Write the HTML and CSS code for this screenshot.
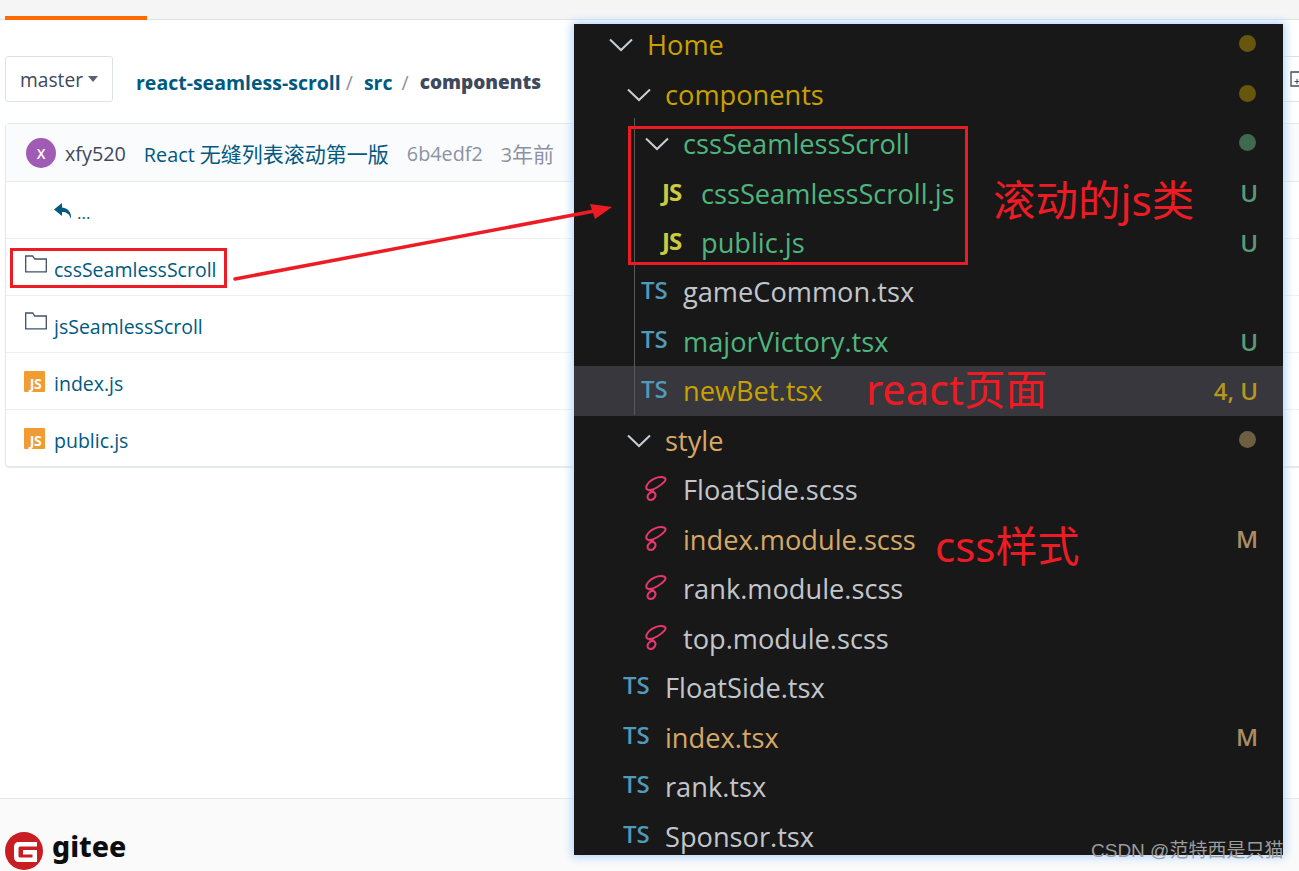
FILE: index.html
```html
<!DOCTYPE html>
<html lang="zh">
<head>
<meta charset="utf-8">
<title>react-seamless-scroll</title>
<link rel="stylesheet" href="styles.css">
</head>
<body>
<div class="page">
  <header class="topbar"><span class="tab-active"></span></header>
  <main class="main">
    <div class="toolbar">
      <button class="branch">master<span class="caret"></span></button>
      <nav class="crumbs">
        <a class="crumb">react-seamless-scroll</a><span class="sep sep-a">/</span>
        <a class="crumb">src</a><span class="sep sep-b">/</span>
        <strong class="crumb-current">components</strong>
      </nav>
      <button class="add-btn"><svg width="14" height="16" viewBox="0 0 14 16"><path d="M1 1h12v14H1z" fill="none" stroke="#40485b" stroke-width="1.4"/><path d="M7 8v5M4.5 10.5h5" stroke="#40485b"/></svg></button>
    </div>
    <section class="card">
      <div class="commit">
        <span class="avatar">X</span>
        <span class="author">xfy520</span>
        <a class="message">React <span class="cjk">无缝列表滚动第一版</span></a>
        <span class="meta sha">6b4edf2</span>
        <span class="meta">3<span class="cjk">年前</span></span>
      </div>
      <div class="row row-up">
        <svg class="back" width="19" height="17" viewBox="0 0 19 17"><path d="M8 0 0 6.6 8 13V9c4.500 0 7 1.500 9 7 .6-6-2.500-11-9-11.500z" fill="#005980"/></svg>
        <a class="file-link dots">...</a>
      </div>
      <div class="row">
        <svg class="folder" width="22" height="18" viewBox="0 0 22 18"><path d="M.7 16.800V1h7l2 3h11.600v12.800z" fill="none" stroke="#40506b" stroke-width="1.300"/></svg>
        <a class="file-link">cssSeamlessScroll</a>
      </div>
      <div class="row">
        <svg class="folder" width="22" height="18" viewBox="0 0 22 18"><path d="M.7 16.800V1h7l2 3h11.600v12.800z" fill="none" stroke="#40506b" stroke-width="1.300"/></svg>
        <a class="file-link">jsSeamlessScroll</a>
      </div>
      <div class="row">
        <span class="js-file"><span class="js-file-text">JS</span></span>
        <a class="file-link">index.js</a>
      </div>
      <div class="row">
        <span class="js-file"><span class="js-file-text">JS</span></span>
        <a class="file-link">public.js</a>
      </div>
    </section>
  </main>
  <footer class="footer">
    <svg class="logo" width="38" height="38" viewBox="0 0 38 38"><circle cx="19" cy="19" r="19" fill="#c71d23"/><path d="M14 10H32V14.500H15Q13.500 14.500 13.500 16V24Q13.500 25.500 15 25.500H27.500V22.500H18V18H32V30H14Q9 30 9 25V15Q9 10 14 10z" fill="#fff"/></svg>
    <span class="brand">gitee</span>
  </footer>
</div>

<aside class="tree">
  <div class="tree-row d0 c-yellow"><svg class="chev" viewBox="0 0 24 14"><path d="M1 1.500 12 12 23 1.500" /></svg><span class="name">Home</span><span class="dot dot-y"></span></div>
  <div class="tree-row d1 c-yellow"><svg class="chev" viewBox="0 0 24 14"><path d="M1 1.500 12 12 23 1.500" /></svg><span class="name">components</span><span class="dot dot-y"></span></div>
  <div class="tree-row d2 c-green"><svg class="chev" viewBox="0 0 24 14"><path d="M1 1.500 12 12 23 1.500" /></svg><span class="name">cssSeamlessScroll</span><span class="dot dot-g"></span></div>
  <div class="tree-row d3 c-green"><span class="ic-js">JS</span><span class="name">cssSeamlessScroll.js</span><span class="badge b-g">U</span></div>
  <div class="tree-row d3 c-green"><span class="ic-js">JS</span><span class="name">public.js</span><span class="badge b-g">U</span></div>
  <div class="tree-row d2f c-plain"><span class="ic-ts">TS</span><span class="name">gameCommon.tsx</span></div>
  <div class="tree-row d2f c-green"><span class="ic-ts">TS</span><span class="name">majorVictory.tsx</span><span class="badge b-g">U</span></div>
  <div class="tree-row d2f c-yellow selected"><span class="ic-ts">TS</span><span class="name">newBet.tsx</span><span class="badge b-y">4, U</span></div>
  <div class="tree-row d1 c-orange"><svg class="chev" viewBox="0 0 24 14"><path d="M1 1.500 12 12 23 1.500" /></svg><span class="name">style</span><span class="dot dot-o"></span></div>
  <div class="tree-row d2f c-plain"><svg class="ic-sass" viewBox="0 0 22 26"><path d="M20 3C14 0 4 5 1.500 11 0 16 6 16 12 12.500 18 9 22 5 20 3M3 15C8 16 12 18 10 22 8 26 3 26 2.500 22 2.500 19 6 17 9 16" /></svg><span class="name">FloatSide.scss</span></div>
  <div class="tree-row d2f c-orange"><svg class="ic-sass" viewBox="0 0 22 26"><path d="M20 3C14 0 4 5 1.500 11 0 16 6 16 12 12.500 18 9 22 5 20 3M3 15C8 16 12 18 10 22 8 26 3 26 2.500 22 2.500 19 6 17 9 16" /></svg><span class="name">index.module.scss</span><span class="badge b-m">M</span></div>
  <div class="tree-row d2f c-plain"><svg class="ic-sass" viewBox="0 0 22 26"><path d="M20 3C14 0 4 5 1.500 11 0 16 6 16 12 12.500 18 9 22 5 20 3M3 15C8 16 12 18 10 22 8 26 3 26 2.500 22 2.500 19 6 17 9 16" /></svg><span class="name">rank.module.scss</span></div>
  <div class="tree-row d2f c-plain"><svg class="ic-sass" viewBox="0 0 22 26"><path d="M20 3C14 0 4 5 1.500 11 0 16 6 16 12 12.500 18 9 22 5 20 3M3 15C8 16 12 18 10 22 8 26 3 26 2.500 22 2.500 19 6 17 9 16" /></svg><span class="name">top.module.scss</span></div>
  <div class="tree-row d1f c-plain"><span class="ic-ts">TS</span><span class="name">FloatSide.tsx</span></div>
  <div class="tree-row d1f c-orange"><span class="ic-ts">TS</span><span class="name">index.tsx</span><span class="badge b-m">M</span></div>
  <div class="tree-row d1f c-plain"><span class="ic-ts">TS</span><span class="name">rank.tsx</span></div>
  <div class="tree-row d1f c-plain"><span class="ic-ts">TS</span><span class="name">Sponsor.tsx</span></div>
  <span class="indent-guide"></span>
</aside>

<span class="mark-box mark-left"></span>
<span class="mark-box mark-right"></span>
<svg class="arrow" width="400" height="100" viewBox="0 0 400 100"><path d="M2 75 372 5" stroke="#ed1c24" stroke-width="3.500" fill="none" stroke-linecap="round"/><path d="M379 3 357 0 362 15z" fill="#ed1c24"/></svg>
<span class="note note-js">滚动的js类</span>
<span class="note note-react">react页面</span>
<span class="note note-css">css样式</span>
<span class="watermark">CSDN @范特西是只猫</span>
</body>
</html>
```
FILE: styles.css
```css
* { box-sizing: border-box; }
html, body { margin: 0; height: 871px; overflow: hidden; background: #fff; }
body { font-family: "Open Sans", "Noto Sans CJK SC", sans-serif; position: relative; }
button { font: inherit; background: #fff; }
a { color: inherit; text-decoration: none; }

.page { display: flex; flex-direction: column; height: 871px; width: 1299px; }
.topbar { height: 20px; flex: none; background: #f5f5f5; border-bottom: 1px solid #dfe1e3; padding-left: 5px; display: flex; align-items: flex-end; }
.tab-active { width: 142px; height: 4px; background: #ff6a00; margin-bottom: -1px; }

.main { flex: 1; padding: 36px 0 0 5px; min-height: 0; overflow: hidden; }
.toolbar { display: flex; align-items: center; height: 46px; width: 1330px; }
.branch { width: 108px; height: 46px; border: 1px solid #dce3e8; border-radius: 3px; padding: 0 0 0 14px; display: flex; align-items: center; font-size: 19.200px; color: #40485b; }
.caret { width: 0; height: 0; margin: 0 0 0 5px; border: 5px solid transparent; border-top: 6px solid #5a6270; border-bottom: 0; }
.crumbs { display: flex; align-items: center; margin-left: 23px; font-size: 19.500px; font-weight: 700; padding-top: 6px; color: #005980; }
.crumb { color: #005980; }
.sep { font-weight: 400; color: #8c92a4; }
.sep-a { margin: 0 11px 0 5px; }
.sep-b { margin: 0 11px 0 9px; }
.crumb-current { color: #40485b; font-size: 19px; }
.add-btn { margin-left: auto; width: 70px; height: 46px; border: 1px solid #dce3e8; padding: 0 0 0 24px; display: flex; align-items: center; }

.card { margin-top: 21px; width: 1330px; border: 1px solid #e3e9ed; border-radius: 4px; box-shadow: 0 1px 1px #e3e9ed; }
.commit { height: 58px; background: #fafbfc; border-bottom: 1px solid #e3e9ed; display: flex; align-items: center; padding: 1px 0 0 20px; font-size: 19.800px; }
.cjk { font-size: 21px; }
.avatar { width: 30px; height: 30px; border-radius: 50%; background: #a05bb5; color: #fff; font-size: 14px; font-weight: 600; display: flex; align-items: center; justify-content: center; }
.author { margin-left: 9px; color: #40485b; }
.message { margin-left: 18px; color: #005980; }
.meta { color: #8c92a4; }
.sha { margin-left: 18px; margin-right: 18px; }

.row { height: 57px; border-bottom: 1px solid #eef1f4; display: flex; align-items: center; padding-left: 18px; font-size: 19.500px; color: #005980; }
.row:last-child { border-bottom: 0; height: 56px; }
.file-link { margin-left: 7px; padding-top: 5px; }
.folder { margin-left: 1px; margin-top: -6px; flex: none; }
.back { margin-left: 30px; margin-top: 2px; }
.dots { margin-left: 4px; font-size: 17px; padding-top: 4px; }
.js-file { width: 21px; height: 21px; background: #f19c33; border-radius: 1px; display: flex; align-items: flex-end; justify-content: center; margin-top: 1px; }
.js-file-text { color: #fff; font-size: 14px; font-weight: 700; line-height: 17px; letter-spacing: -.5px; padding-left: 2px; }
.row .js-file + .file-link { margin-left: 9px; }

.footer { flex: none; height: 73px; background: #fafafa; border-top: 1px solid #e3e9ed; display: flex; align-items: center; padding: 0 0 0 5px; }
.logo { margin-top: 32px; flex: none; }
.brand { margin: 22px 0 0 9px; font-family: "Noto Sans", sans-serif; font-weight: 800; font-size: 28.500px; letter-spacing: 0; color: #0d0d0d; }

/* screenshot pasted over the page */
.tree { position: absolute; left: 574px; top: 24px; width: 709px; height: 831px; background: #181818; box-shadow: 0 0 9px 2px #b3d4fb; overflow: hidden; font-size: 27.200px; }
.tree-row { height: 49.470px; display: flex; align-items: center; position: relative; padding-right: 25px; line-height: 1; }
.tree-row:first-child { margin-top: -4px; }
.selected { background: #37373d; }
.name { white-space: nowrap; }
.chev { width: 24px; height: 14px; fill: none; stroke: #c5cfd8; stroke-width: 2; flex: none; margin-top: 1px; }
.d0 { padding-left: 35px; } .d0 .name { margin-left: 14px; }
.d1 { padding-left: 53px; } .d1 .name { margin-left: 14px; }
.d2 { padding-left: 71px; } .d2 .name { margin-left: 14px; }
.d3 { padding-left: 88px; }
.d2f { padding-left: 67px; }
.d1f { padding-left: 49px; }
.ic-js { width: 39px; flex: none; color: #cbcb41; font-weight: 700; font-size: 24px; letter-spacing: -1px; margin-top: -3px; }
.ic-ts { width: 42px; flex: none; color: #519aba; font-weight: 600; font-size: 24px; margin-top: -5px; letter-spacing: 0; }
.ic-sass { width: 22px; height: 26px; flex: none; fill: none; stroke: #e8376f; stroke-width: 2; margin-right: 16px; margin-left: 4px; margin-top: -3px; }
.c-yellow .name { color: #c9a100; }
.c-green .name { color: #4fb57e; }
.c-plain .name { color: #c2c6cc; }
.c-orange .name { color: #d6a866; }
.dot { width: 17px; height: 17px; border-radius: 50%; margin-left: auto; margin-top: -2px; margin-right: 2px; }
.dot-y { background: #68560d; }
.dot-g { background: #3f6a50; }
.dot-o { background: #6e5f42; }
.badge { margin-left: auto; font-size: 24px; font-weight: 600; }
.b-g { color: #5b9a78; }
.b-y { color: #b5961f; }
.b-m { color: #a98e63; }
.indent-guide { position: absolute; left: 60px; top: 94px; height: 297px; width: 1px; background: #585858; }

.mark-box { position: absolute; border: 3px solid #ed1c24; }
.mark-left { left: 10px; top: 248px; width: 217px; height: 40px; }
.mark-right { left: 628px; top: 126px; width: 340px; height: 139px; }
.arrow { position: absolute; left: 233px; top: 204px; overflow: visible; }
.note { position: absolute; color: #ed1c24; white-space: nowrap; line-height: 1; font-family: "Noto Sans", "Noto Sans CJK SC", sans-serif; }
.note-js { left: 993px; top: 179px; font-size: 42.500px; }
.note-react { left: 866px; top: 369px; font-size: 41.500px; }
.note-css { left: 935px; top: 525px; font-size: 42px; }
.watermark { position: absolute; left: 1091px; top: 840px; font-family: "Liberation Sans", "Noto Sans CJK SC", sans-serif; font-size: 19px; line-height: 22px; color: #9c9c9c; white-space: nowrap; }
```
